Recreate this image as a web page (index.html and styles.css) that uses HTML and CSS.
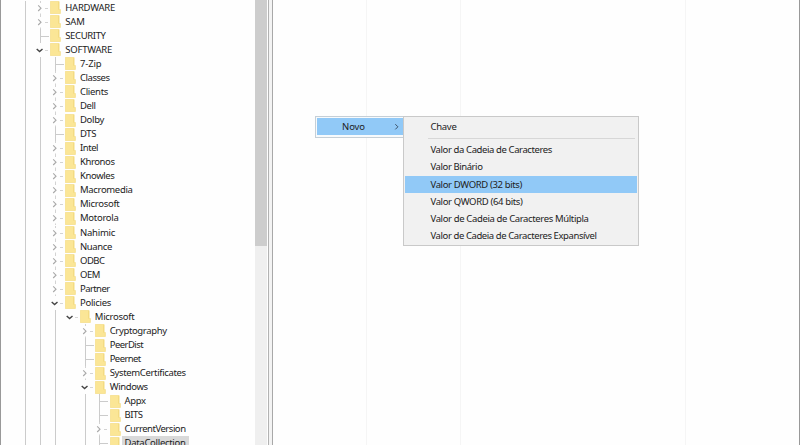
FILE: index.html
```html
<!DOCTYPE html>
<html lang="pt-BR">
<head>
<meta charset="utf-8">
<title>Editor do Registro</title>
<link rel="stylesheet" href="styles.css">
</head>
<body>
<svg width="0" height="0" class="defs">
  <symbol id="folder" viewBox="0 0 11 13"><path d="M.3.5h8.8v8h1.3v4H.3z" fill="#fbe696"/><path d="M.3.5h8.8v8h1.3v4H.3z" fill="none" stroke="#f3dc85" stroke-width=".7"/><path d="M8.6 1v7.6" stroke="#f0d67b" stroke-width=".7"/></symbol>
  <symbol id="closed" viewBox="0 0 15 14"><path d="M5.2 4.4l2.8 2.8-2.8 2.8" fill="none" stroke="#a8a8a8" stroke-width="1.1"/><path d="M7.5 0v2M7.5 12.5v1.5M12 7.5h3" stroke="#c8c8c8" stroke-width=".8"/></symbol>
  <symbol id="open" viewBox="0 0 15 14"><path d="M3.7 5.9l2.9 2.7 2.9-2.7" fill="none" stroke="#454545" stroke-width="1.4"/><path d="M12 7.5h3" stroke="#ccc" stroke-width=".8"/></symbol>
</svg>
<div class="window">
  <aside class="tree" id="tree"></aside>
  <div class="scrollbar"><div class="thumb"></div></div>
  <div class="splitter"></div>
  <main class="values">
    <div class="col c1"></div><div class="col c2"></div><div class="col c3"></div>
  </main>
</div>
<div class="menu parent"><div class="item"><span class="t" data-w="23">Novo</span><svg width="6" height="8" viewBox="0 0 6 8"><path d="M1.3 1.2l2.6 2.6-2.6 2.6" fill="none" stroke="#3c536b" stroke-width="1"/></svg></div></div>
<div class="menu sub">
  <div class="item"><span class="t" data-w="26">Chave</span></div>
  <div class="rule"></div>
  <div class="item"><span class="t" data-w="121.5">Valor da Cadeia de Caracteres</span></div>
  <div class="item"><span class="t" data-w="52">Valor Binário</span></div>
  <div class="item on"><span class="t" data-w="91.5">Valor DWORD (32 bits)</span></div>
  <div class="item"><span class="t" data-w="92">Valor QWORD (64 bits)</span></div>
  <div class="item"><span class="t" data-w="158">Valor de Cadeia de Caracteres Múltipla</span></div>
  <div class="item"><span class="t" data-w="166">Valor de Cadeia de Caracteres Expansível</span></div>
</div>
<script src="tree.js"></script>
</body>
</html>
```
FILE: styles.css
```css
* { box-sizing: border-box; }
body { margin: 0; width: 800px; height: 445px; overflow: hidden; background: #fefefe; color: #222; font: 9.5px/14px "Noto Sans", "Open Sans", sans-serif; }
.defs { position: absolute; }
.window { display: flex; width: 800px; height: 445px; border-left: 1px solid #999; border-right: 1px solid #999; overflow: hidden; }
.tree { width: 253.5px; padding: .5px 0 0 17.2px; flex: none; }
.row { display: flex; height: 14.07px; white-space: nowrap; }
.cell { width: 14.85px; height: 14.07px; flex: none; position: relative; }
.cell svg { display: block; width: 15px; height: 14px; }
.line::before { content: ""; position: absolute; left: 7px; top: 0; width: 1px; height: 14.1px; background: #cbcbcb; }
.leaf::after { content: ""; position: absolute; left: 8px; top: 7px; width: 8px; height: 1px; background: #cbcbcb; }
.folder { width: 11px; height: 13px; margin: .5px 4px 0 2.3px; flex: none; }
.label { display: block; height: 14px; }
.selected .label { background: #d9d9d9; margin-left: -3px; padding: 0 3px; }
.t { display: inline-block; white-space: nowrap; }
.scrollbar { width: 12px; background: #efefef; flex: none; }
.thumb { height: 245.5px; background: #cdcdcd; }
.splitter { width: 5px; margin-left: 1px; flex: none; border-left: 1px solid #b2b2b2; border-right: 1px solid #a8a8a8; background: #f3f3f3; }
.values { display: flex; flex: 1; }
.col { border-right: 1px solid #f5f5f5; }
.c1 { width: 94.5px; }
.c2 { width: 94px; }
.c3 { width: 225px; }
.menu { position: absolute; background: #f1f1f1; border: 1px solid #c9c9c9; }
.parent { left: 315px; top: 116px; width: 90px; height: 22px; padding: 1px; background: #f7fafc; border-color: #c5cfd7; }
.parent .item { display: flex; align-items: center; justify-content: space-between; height: 17px; padding: 0 3px 0 25px; background: #91c9f7; }
.sub { left: 403px; top: 116px; width: 236px; height: 130px; padding: 1px; }
.sub .item { height: 17.2px; line-height: 17.2px; padding-left: 25.5px; }
.sub .on { background: #91c9f7; }
.rule { height: 1px; margin: 3px 2px 2px 23px; background: #d7d7d7; }
```
FILE: tree.js
```js
// [depth, state, name, label width]
// state: ">" collapsed, "v" expanded, "-" no children
const rows = [
  [1, ">", "HARDWARE", 50], [1, ">", "SAM", 19.5], [1, "-", "SECURITY", 40.5], [1, "v", "SOFTWARE", 47],
  [2, "-", "7-Zip", 21.5], [2, ">", "Classes", 29.5], [2, ">", "Clients", 28], [2, ">", "Dell", 15.5],
  [2, ">", "Dolby", 24], [2, "-", "DTS", 16], [2, ">", "Intel", 18], [2, ">", "Khronos", 34.5],
  [2, ">", "Knowles", 34.5], [2, ">", "Macromedia", 52.5], [2, ">", "Microsoft", 39.5],
  [2, ">", "Motorola", 38.5], [2, ">", "Nahimic", 35], [2, ">", "Nuance", 32], [2, ">", "ODBC", 24.5],
  [2, ">", "OEM", 20], [2, ">", "Partner", 29.5], [2, "v", "Policies", 31], [3, "v", "Microsoft", 39.5],
  [4, ">", "Cryptography", 57], [4, "-", "PeerDist", 33.5], [4, "-", "Peernet", 31],
  [4, ">", "SystemCertificates", 76], [4, "v", "Windows", 38], [5, "-", "Appx", 21],
  [5, "-", "BITS", 18], [5, ">", "CurrentVersion", 61], [5, "-", "DataCollection", 61]
];
document.getElementById("tree").innerHTML = rows.map(([depth, state, name, w]) => {
  let cells = "";
  for (let i = 0; i < depth; i++) cells += `<span class="cell ${i === 3 ? "" : "line"}"></span>`;
  cells += state === "-"
    ? '<span class="cell line leaf"></span>'
    : `<span class="cell"><svg><use href="#${state === "v" ? "open" : "closed"}"/></svg></span>`;
  return `<div class="row ${name === "DataCollection" ? "selected" : ""}">${cells}<svg class="folder"><use href="#folder"/></svg><span class="label"><span class="t" data-w="${w}">${name}</span></span></div>`;
}).join("");
document.querySelectorAll(".t").forEach(t => {
  const gap = Number(t.dataset.w) - t.getBoundingClientRect().width;
  t.style.letterSpacing = gap / t.textContent.length + "px";
});
```
